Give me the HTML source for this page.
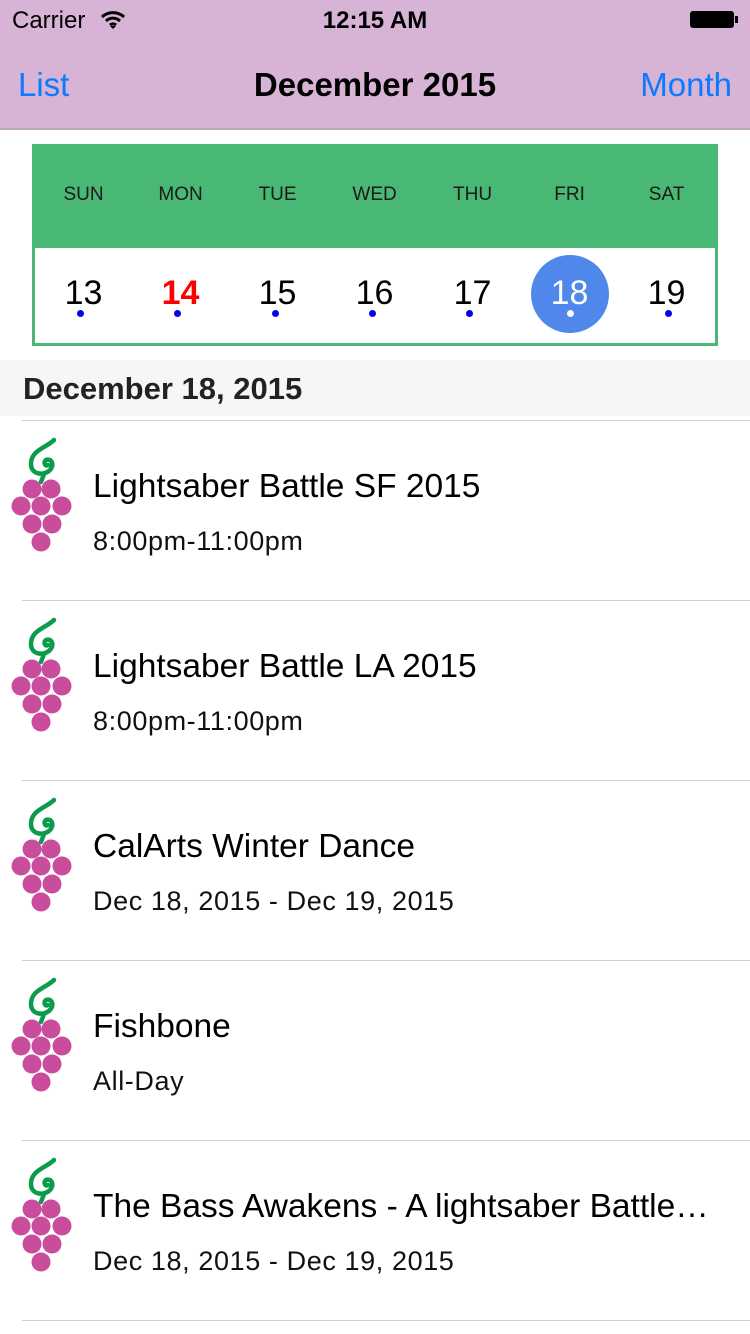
<!DOCTYPE html>
<html><head><meta charset="utf-8"><style>
body{margin:0;width:750px;height:1334px;overflow:hidden;background:#fff;font-family:"Liberation Sans",sans-serif;position:relative}
.abs{position:absolute}
.nav{left:0;top:0;width:750px;height:128px;background:#d7b3d5;border-bottom:2px solid #b9a8b8}
.cal{left:32px;top:144px;width:680px;height:196px;border:3px solid #48b874;background:#fff}
.head{left:0;top:0;width:680px;height:101px;background:#48b874}
.dn{width:97.14px;text-align:center;font-size:19px;color:#1a1a1a;top:37px}
.d{width:97.14px;text-align:center;font-size:34px;top:127px;color:#000}
.dot{width:7px;height:7px;border-radius:50%;background:#0000ee}
.sec{left:0;top:360px;width:750px;height:56px;background:#f6f6f6}
.row{left:0;width:750px;height:180px}
.line{left:22px;width:728px;height:1px;background:#d0d0d0}
.t{left:93px;font-size:33.5px;color:#000}
.s{left:93px;font-size:27px;color:#111;letter-spacing:0.6px}
</style></head><body>
<div class="abs nav">
 <div class="abs" style="left:12px;top:7px;font-size:24px">Carrier</div>
 <svg class="abs" style="left:100px;top:10px" width="26" height="20" viewBox="0 0 26 20"><path d="M2 7a16 16 0 0 1 22 0M6 11a10 10 0 0 1 14 0M10 15a4.5 4.5 0 0 1 6 0" stroke="#000" stroke-width="3" fill="none"/><path d="M13 19l-3-3h6z" fill="#000"/></svg>
 <div class="abs" style="left:0;width:750px;top:7px;text-align:center;font-size:24px;font-weight:bold">12:15 AM</div>
 <div class="abs" style="left:690px;top:11px;width:44px;height:17px;border:1px solid #000;border-radius:3px;background:#000;box-sizing:border-box"></div>
 <div class="abs" style="left:735px;top:16px;width:3px;height:7px;background:#000"></div>
 <div class="abs" style="left:18px;top:66px;font-size:33px;color:#0a7aff">List</div>
 <div class="abs" style="left:0;width:750px;top:66px;text-align:center;font-size:33px;font-weight:bold">December 2015</div>
 <div class="abs" style="right:18px;top:66px;font-size:33px;color:#0a7aff">Month</div>
</div>
<div class="abs cal">
 <div class="abs head">
  <div class="abs dn" style="left:0">SUN</div><div class="abs dn" style="left:97px">MON</div><div class="abs dn" style="left:194px">TUE</div><div class="abs dn" style="left:291px">WED</div><div class="abs dn" style="left:389px">THU</div><div class="abs dn" style="left:486px">FRI</div><div class="abs dn" style="left:583px">SAT</div>
 </div>
 <div class="abs" style="left:496px;top:108px;width:78px;height:78px;border-radius:50%;background:#4f87ea"></div>
 <div class="abs d" style="left:0;top:127px">13</div>
 <div class="abs d" style="left:97px;color:#f00;font-weight:bold">14</div>
 <div class="abs d" style="left:194px">15</div>
 <div class="abs d" style="left:291px">16</div>
 <div class="abs d" style="left:389px">17</div>
 <div class="abs d" style="left:486px;color:#fff">18</div>
 <div class="abs d" style="left:583px">19</div>
 <div class="abs dot" style="left:42px;top:163px"></div>
 <div class="abs dot" style="left:139px;top:163px"></div>
 <div class="abs dot" style="left:237px;top:163px"></div>
 <div class="abs dot" style="left:334px;top:163px"></div>
 <div class="abs dot" style="left:431px;top:163px"></div>
 <div class="abs dot" style="left:532px;top:163px;background:#fff"></div>
 <div class="abs dot" style="left:630px;top:163px"></div>
</div>
<div class="abs sec"><div class="abs" style="left:23px;top:11px;font-size:31px;font-weight:bold;color:#222">December 18, 2015</div></div>
<div class="abs line" style="top:420px"></div>

<svg width="0" height="0" style="position:absolute"><defs><g id="g">
<path d="M54 10C46 18 31 20 31 34C31 45 44 46 50 40C55 34 51 28 46 30C43 32 45 37 48 35M44 44L41 52" stroke="#0b9b4a" stroke-width="4.5" fill="none" stroke-linecap="round"/>
<g fill="#c94d9c"><circle cx="32" cy="59" r="9.5"/><circle cx="51" cy="59" r="9.5"/><circle cx="21" cy="76" r="9.5"/><circle cx="41" cy="76" r="9.5"/><circle cx="62" cy="76" r="9.5"/><circle cx="32" cy="94" r="9.5"/><circle cx="52" cy="94" r="9.5"/><circle cx="41" cy="112" r="9.5"/></g>
</g></defs></svg>

<div class="abs row" style="top:420px">
 <svg class="abs" style="left:0;top:10px" width="80" height="125"><use href="#g"/></svg>
 <div class="abs t" style="top:48px">Lightsaber Battle SF 2015</div>
 <div class="abs s" style="top:106px">8:00pm-11:00pm</div>
</div>
<div class="abs line" style="top:600px"></div>
<div class="abs row" style="top:600px">
 <svg class="abs" style="left:0;top:10px" width="80" height="125"><use href="#g"/></svg>
 <div class="abs t" style="top:48px">Lightsaber Battle LA 2015</div>
 <div class="abs s" style="top:106px">8:00pm-11:00pm</div>
</div>
<div class="abs line" style="top:780px"></div>
<div class="abs row" style="top:780px">
 <svg class="abs" style="left:0;top:10px" width="80" height="125"><use href="#g"/></svg>
 <div class="abs t" style="top:48px">CalArts Winter Dance</div>
 <div class="abs s" style="top:106px">Dec 18, 2015 - Dec 19, 2015</div>
</div>
<div class="abs line" style="top:960px"></div>
<div class="abs row" style="top:960px">
 <svg class="abs" style="left:0;top:10px" width="80" height="125"><use href="#g"/></svg>
 <div class="abs t" style="top:48px">Fishbone</div>
 <div class="abs s" style="top:106px">All-Day</div>
</div>
<div class="abs line" style="top:1140px"></div>
<div class="abs row" style="top:1140px">
 <svg class="abs" style="left:0;top:10px" width="80" height="125"><use href="#g"/></svg>
 <div class="abs t" style="top:48px">The Bass Awakens - A lightsaber Battle…</div>
 <div class="abs s" style="top:106px">Dec 18, 2015 - Dec 19, 2015</div>
</div>
<div class="abs line" style="top:1320px"></div>
</body></html>
